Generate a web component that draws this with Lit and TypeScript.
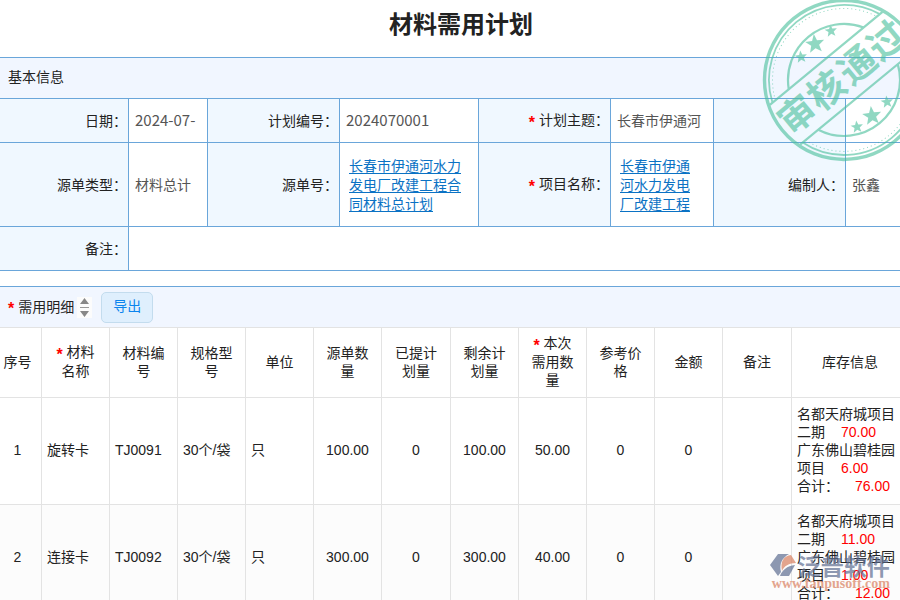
import { LitElement, html, svg, css, nothing } from "lit";
import { customElement } from "lit/decorators.js";

interface StockLine { name: string; qty: string; }
interface Row {
  no: number; name: string; code: string; spec: string; unit: string;
  source: string; taken: string; left: string; need: string; price: string; amount: string;
  stock: StockLine[]; total: string;
}

const ROWS: Row[] = [
  { no: 1, name: "旋转卡", code: "TJ0091", spec: "30个/袋", unit: "只", source: "100.00", taken: "0", left: "100.00", need: "50.00", price: "0", amount: "0",
    stock: [{ name: "名都天府城项目二期", qty: "70.00" }, { name: "广东佛山碧桂园项目", qty: "6.00" }], total: "76.00" },
  { no: 2, name: "连接卡", code: "TJ0092", spec: "30个/袋", unit: "只", source: "300.00", taken: "0", left: "300.00", need: "40.00", price: "0", amount: "0",
    stock: [{ name: "名都天府城项目二期", qty: "11.00" }, { name: "广东佛山碧桂园项目", qty: "1.00" }], total: "12.00" },
];

const HEADS: { text: string; col: string; required?: boolean }[] = [
  { text: "序号", col: "d-no" }, { text: "材料名称", col: "d-col", required: true },
  { text: "材料编号", col: "d-col" }, { text: "规格型号", col: "d-col" },
  { text: "单位", col: "d-col" }, { text: "源单数量", col: "d-col" },
  { text: "已提计划量", col: "d-wide" }, { text: "剩余计划量", col: "d-col" },
  { text: "本次需用数量", col: "d-col", required: true }, { text: "参考价格", col: "d-col" },
  { text: "金额", col: "d-col" }, { text: "备注", col: "d-wide" }, { text: "库存信息", col: "d-stock" },
];

const star = html`<span class="star">*</span>`;

@customElement("approval-stamp")
export class ApprovalStamp extends LitElement {
  static styles = css`
    :host { display: block; }
    svg { display: block; }
    .word { font: 700 37px "Noto Sans CJK SC", sans-serif; }
  `;
  private starAt(x: number, y: number, r: number) {
    const pts = Array.from({ length: 10 }, (_, i) => {
      const a = (Math.PI / 5) * i - Math.PI / 2 - 0.12;
      const d = i % 2 ? r * 0.42 : r;
      return `${(x + d * Math.cos(a)).toFixed(1)},${(y + d * Math.sin(a)).toFixed(1)}`;
    }).join(" ");
    return svg`<polygon points=${pts}></polygon>`;
  }
  render() {
    return html`<svg width="164" height="164" viewBox="-82 -82 164 164" role="img" aria-label="审核通过">
      <g fill="none" stroke="#48bf9b" opacity="0.6">
        <circle r="79.5" stroke-width="3.4"></circle>
        <g transform="rotate(-39.5)">
          <path stroke-width="1.8" d="M-69.6-28A75 75 0 0 1 69.6-28M-71.7 22A75 75 0 0 0 71.7 22"></path>
          <path stroke-width="1" stroke-dasharray="1 3" d="M-65.8-28A71.5 71.5 0 0 1 65.8-28M-68 22A71.5 71.5 0 0 0 68 22"></path>
          <path stroke-width="2.2" d="M-48.5-28A56 56 0 0 1 48.5-28M-51.5 22A56 56 0 0 0 51.5 22"></path>
          <path stroke-width="2.2" d="M-73-28H73M-75 22H75"></path>
          <text class="word" fill="#48bf9b" stroke="none" text-anchor="middle" x="-58 -20 20 58" y="10">审核通过</text>
        </g>
        <g fill="#48bf9b" stroke="none">
          ${this.starAt(-29, -36, 10)}${this.starAt(-13, -49, 6.5)}${this.starAt(-43, -23, 6.5)}
          ${this.starAt(28, 36, 10)}${this.starAt(43, 22, 6.5)}${this.starAt(13, 47, 6.5)}
        </g>
      </g>
    </svg>`;
  }
}

@customElement("brand-mark")
export class BrandMark extends LitElement {
  static styles = css`
    :host { display: block; opacity: 0.7; }
    .top { display: flex; align-items: center; gap: 2px; height: 26px; }
    .name { font: 700 23px/26px "Noto Sans CJK SC", sans-serif; color: #5f6f92; }
    .url { font: 700 14px/12px "Liberation Serif", serif; color: #d9805f; padding-left: 2px; }
  `;
  render() {
    return html`<div class="top">
        <svg width="26" height="26" viewBox="0 0 26 26" aria-hidden="true">
          <path fill="#5f6f92" d="M8 2H19C12 6 9 12 11 20L8 24L0 13z"></path>
          <path fill="#d9805f" d="M12 19C10 9 14 4 21 3L26 11C19 11 14 14 12 19z"></path>
          <path fill="#5f6f92" d="M25 13L19 24H10C12 18 17 14 25 13z"></path>
        </svg>
        <span class="name">泛普软件</span>
      </div>
      <div class="url">www.fanpusoft.com</div>`;
  }
}

@customElement("app-root")
export class AppRoot extends LitElement {
  static styles = css`
    :host {
      display: block; position: relative; overflow: hidden; height: 100vh; background: #fff;
      color: #222; font: 14px/18px "Liberation Sans", "Noto Sans CJK SC", sans-serif;
    }
    * { box-sizing: border-box; }
    h1 { margin: 0; padding: 5px 0 0 22px; height: 57px; text-align: center; font: 700 24px/36px "Noto Sans CJK SC", sans-serif; }
    h2 { margin: 0; font-size: 14px; font-weight: 400; }
    .bar { display: flex; align-items: center; height: 41px; padding: 0 8px 2px; background: #f1f6ff; border-top: 1px solid #6aa6da; }
    table { width: 100%; border-collapse: separate; border-spacing: 0; table-layout: fixed; }
    th { font-weight: 400; }
    .form { border-bottom: 1px solid #6aa6da; }
    .form th, .form td { border-top: 1px solid #6aa6da; border-right: 1px solid #6aa6da; padding: 0; height: 44px; }
    .form .tall th, .form .tall td { height: 84px; }
    .form th { background: #f0f8ff; text-align: right; padding-right: 1px; }
    .form td { padding: 0 6px; color: #555; }
    .form th:last-child, .form td:last-child { border-right: 0; }
    .c-date { width: 79px; }
    .c-first { width: 129px; }
    .c-label { width: 132px; }
    .c-no { width: 139px; }
    .c-topic { width: 103px; }
    input { display: block; width: 100%; height: 24px; padding: 0 0 2px; border: 0; outline: 0; background: none; color: #555; font: inherit; }
    .figure { font: 15px/24px "Noto Sans CJK SC", sans-serif; }
    .form td.link { padding: 2px 16px 0 9px; }
    a { color: #0b72c4; line-height: 19px; display: block; text-underline-offset: 2px; }
    .star { color: #f00; font-weight: 700; font-size: 16px; line-height: 14px; margin-right: 4px; vertical-align: -3px; }
    .detail-bar { margin-top: 15px; padding-bottom: 0; }
    .detail-bar .star { padding-top: 3px; }
    .sort { display: flex; background: #fcfcfc; margin: 0 9px 0 3px; }
    .sort svg { display: block; }
    button { width: 52px; height: 31px; padding: 0 0 2px; border: 1px solid #c3dcee; border-radius: 5px; background: #dfeffd; color: #0a84ee; font: inherit; }
    .detail th, .detail td { border-top: 1px solid #e3e3e3; border-right: 1px solid #e3e3e3; text-align: center; padding: 0 10px 2px; }
    .detail th { height: 70px; }
    .detail td { height: 107px; padding: 0 5px 2px; }
    .detail th:first-child, .detail td:first-child { padding: 0 6px 2px 0; }
    .detail td.text { text-align: left; }
    .detail td.stock { text-align: left; padding: 7px 0 9px 5px; }
    .detail th:last-child { padding-left: 18px; }
    .detail th:last-child, .detail td:last-child { border-right: 0; }
    .detail tr:nth-child(even) td { background: #fcfcfc; }
    .d-no { width: 42px; }
    .d-col { width: 68px; }
    .d-wide { width: 69px; }
    .d-stock { width: auto; }
    .qty { color: #f00; margin-left: 16px; }
    .stamp { position: absolute; top: -2px; right: -26px; }
    .brand { position: absolute; right: 10px; bottom: 10px; }
  `;

  private field(id: string, value: string, figure = false) {
    return html`<td><input id=${id} class=${figure ? "figure" : ""} .value=${value}></td>`;
  }

  private row(r: Row) {
    return html`<tr>
      <td>${r.no}</td>
      <td class="text">${r.name}</td><td class="text">${r.code}</td>
      <td class="text">${r.spec}</td><td class="text">${r.unit}</td>
      <td>${r.source}</td><td>${r.taken}</td><td>${r.left}</td><td>${r.need}</td>
      <td>${r.price}</td><td>${r.amount}</td><td></td>
      <td class="stock">
        ${r.stock.map((s) => html`<div>${s.name}<span class="qty">${s.qty}</span></div>`)}
        <div>合计：<span class="qty">${r.total}</span></div>
      </td>
    </tr>`;
  }

  render() {
    return html`
      <h1>材料需用计划</h1>
      <div class="bar"><h2>基本信息</h2></div>
      <table class="form">
        <colgroup>
          <col class="c-first"><col class="c-date"><col class="c-label"><col class="c-no">
          <col class="c-label"><col class="c-topic"><col class="c-label"><col>
        </colgroup>
        <tr>
          <th><label for="date">日期：</label></th>${this.field("date", "2024-07-", true)}
          <th><label for="no">计划编号：</label></th>${this.field("no", "2024070001", true)}
          <th>${star}<label for="topic">计划主题：</label></th>${this.field("topic", "长春市伊通河")}
          <th></th><td></td>
        </tr>
        <tr class="tall">
          <th><label for="type">源单类型：</label></th>${this.field("type", "材料总计")}
          <th>源单号：</th><td class="link"><a href="#source">长春市伊通河水力发电厂改建工程合同材料总计划</a></td>
          <th>${star}项目名称：</th><td class="link"><a href="#project">长春市伊通河水力发电厂改建工程</a></td>
          <th><label for="author">编制人：</label></th>${this.field("author", "张鑫")}
        </tr>
        <tr><th><label for="remark">备注：</label></th><td colspan="7"><input id="remark"></td></tr>
      </table>

      <div class="bar detail-bar">
        ${star}<h2>需用明细</h2>
        <span class="sort"><svg width="15" height="21" viewBox="0 0 15 21" aria-hidden="true">
          <path fill="#888" d="M7.5 1L12 7H3zM7.5 20L12 14H3z"></path><path stroke="#999" d="M3 10.5H12"></path>
        </svg></span>
        <button type="button">导出</button>
      </div>
      <table class="detail">
        <colgroup>${HEADS.map((h) => html`<col class=${h.col}>`)}</colgroup>
        <thead><tr>${HEADS.map((h) => html`<th>${h.required ? star : nothing}${h.text}</th>`)}</tr></thead>
        <tbody>${ROWS.map((r) => this.row(r))}</tbody>
      </table>
      <approval-stamp class="stamp"></approval-stamp>
      <brand-mark class="brand"></brand-mark>
    `;
  }
}
